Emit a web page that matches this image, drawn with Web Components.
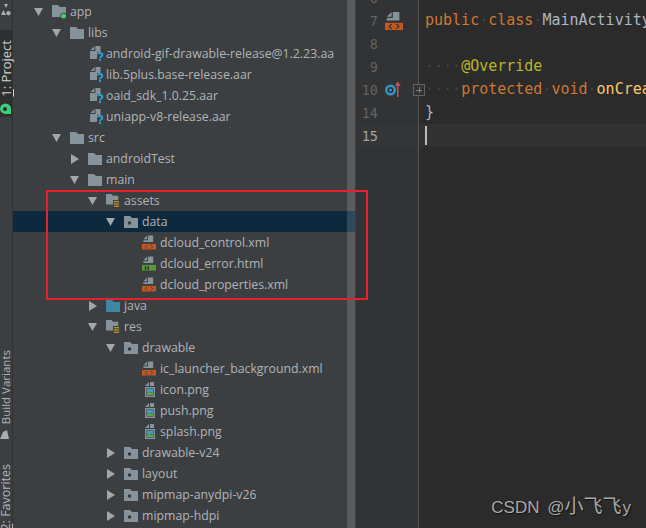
<!DOCTYPE html>
<html>
<head>
<meta charset="utf-8">
<style>
  html, body { margin: 0; height: 100%; background: #3c3f41; overflow: hidden; }
  body { font-family: "Open Sans", "Noto Sans", sans-serif; }
  ide-window { width: 646px; height: 528px; }
</style>
</head>
<body>
<script>
//shared icon markup, all drawn on a small grid
const SHEET = `<path fill="#87939a" d="M5.500 0L1.500 4h4zM6.500 0h5.500v7H1.500V5h5z"/>`;
const ICONS = {
  folder: `<svg width="14" height="12" viewBox="0 0 14 12"><path fill="#87939a" d="M0 0h6l2 2h6v10H0z"/></svg>`,
  res: `<svg width="14" height="12" viewBox="0 0 14 12"><path fill="#87939a" d="M0 0h6l2 2h6v10H0z"/><circle cx="5.500" cy="7" r="1.800" fill="#33383b"/></svg>`,
  java: `<svg width="14" height="12" viewBox="0 0 14 12"><path fill="#3f86a5" d="M0 0h6l2 2h6v10H0z"/></svg>`,
  app: `<svg width="14" height="14" viewBox="0 0 14 14"><path fill="#87939a" d="M0 0h6l2 2h6v10H0z"/><circle cx="11.500" cy="11" r="3.200" fill="#3c3f41"/><circle cx="11.500" cy="11" r="2.500" fill="#3fd06d"/></svg>`,
  lined: `<svg width="16" height="15" viewBox="0 0 16 15"><path fill="#87939a" d="M0 0h6l2 2h6v10H0z"/><path fill="#3c3f41" d="M8 7h8v8H8z"/><path fill="#e0a52e" d="M9 8h6v1H9zM9 10h6v1H9zM9 12h6v1H9zM9 14h6v1H9z"/></svg>`,
  unknown: `<svg width="14" height="15" viewBox="0 0 14 15"><path fill="#87939a" d="M4.500 0L.5 4h4zM5.500 0h5v6H7v7H0V5h5.500z"/><path fill="none" stroke="#2f9fd0" stroke-width="2" d="M7.500 8.200c.5-1.600 4.800-1.600 4.800.7 0 1.500-2.300 1.700-2.300 3.300"/><path fill="#2f9fd0" d="M9 13h2v2H9z"/></svg>`,
  xml: `<svg width="15" height="15" viewBox="0 0 15 15">${SHEET}<path fill="#c2581f" d="M0 9h15v6H0z"/><path fill="none" stroke="#3c3f41" d="M5.500 10l-2 2 2 2M9.500 10l2 2-2 2"/></svg>`,
  html: `<svg width="15" height="15" viewBox="0 0 15 15">${SHEET}<path fill="#569a3c" d="M0 9h15v6H0z"/><path fill="#2c3a2a" d="M3 10h1.200v1.800h2V10h1.200v4.500H6.200v-1.700h-2v1.700H3z"/></svg>`,
  png: `<svg width="12" height="15" viewBox="0 0 12 15"><path fill="#87939a" d="M5 0L1 4h4zM6 0h4v4H6z"/><path fill="#87939a" d="M1 5h10v10H1z"/><path fill="#2f3436" d="M2.500 6.500h7v7h-7z"/><path fill="#3b9dc4" d="M3 7h6v3.500H3z"/><path fill="#5fa344" d="M3 13v-2l2-1.500 2 1.500 2-1v3z"/></svg>`
};

var template_row = document.createElement("template");
template_row.innerHTML = `
<style>
  :host { display: flex; align-items: center; height: 21px; flex: none; white-space: nowrap;
          padding-left: calc(21px + 18px * var(--depth, 0)); color: #b0b4b8; font-size: 12.300px; }
  :host([selected]) { background: #0d293e; }
  #arrow { width: 9px; height: 10px; margin-right: 9px; flex: none; }
  #icon { width: 14px; margin-right: 4px; flex: none; display: flex; align-items: center; overflow: visible; height: 15px; }
  :host([file]) #icon { margin-left: 2px; margin-right: 2px; }
</style>
<svg id="arrow" viewBox="0 0 9 10"></svg><span id="icon"></span><span id="label"><slot></slot></span>
`;
class TreeRow extends HTMLElement {
  constructor(){
    super();
    this.attachShadow({mode:"open"});
  }
  connectedCallback(){
    this.shadowRoot.appendChild(template_row.content.cloneNode(true));
    this.style.setProperty("--depth", this.getAttribute("depth") || 0);
    const arrow = this.shadowRoot.querySelector("#arrow");
    const state = this.getAttribute("arrow");
    if(state == "open") arrow.innerHTML = `<path fill="#a0a6aa" d="M0 1h9L4.500 9z"/>`;
    if(state == "closed") arrow.innerHTML = `<path fill="#a0a6aa" d="M1 0l8 5-8 5z"/>`;
    this.shadowRoot.querySelector("#icon").innerHTML = ICONS[this.getAttribute("icon")] || "";
  }
}
customElements.define("tree-row", TreeRow);

var template_tab = document.createElement("template");
template_tab.innerHTML = `
<style>
  :host { display: flex; flex-direction: column; align-items: center; flex: none; color: #b0b4b8; font-size: 11.500px; width: 12px; }
  :host([active]) { background: #2d2f30; color: #d0d0d0; }
  span { writing-mode: vertical-rl; transform: rotate(180deg); white-space: nowrap; line-height: 12px; }
  u { text-underline-offset: 1px; }
</style>
<span><slot></slot></span><slot name="icon"></slot>
`;
class ToolTab extends HTMLElement {
  constructor(){
    super();
    this.attachShadow({mode:"open"});
    this.shadowRoot.appendChild(template_tab.content.cloneNode(true));
  }
}
customElements.define("tool-tab", ToolTab);

var template_line = document.createElement("template");
template_line.innerHTML = `
<style>
  :host { display: flex; height: 23px; flex: none; font-family: "DejaVu Sans Mono", "Liberation Mono", monospace; }
  :host([fill]) { flex: 1; }
  #gut { width: 62px; flex: none; background: #313335; border-right: 1px solid #555; position: relative; display: flex; align-items: center; }
  #num { width: 22px; text-align: right; color: #606366; font-size: 13.500px; }
  #mark { position: absolute; left: 29px; top: 3px; }
  #code { flex: 1; padding-left: 6px; font-size: 15px; line-height: 23px; white-space: pre; color: #a9b7c6; overflow: hidden; position: relative; }
  :host([current]) #gut { background: #333537; }
  :host([current]) #code { background: #323232; }
  :host([current]) #num { color: #a4a3a3; }
  #fold { display: none; position: absolute; left: 57px; top: 6px; width: 10px; height: 10px; border: 1px solid #606366; background: #313335; color: #808080; }
  #fold::before { content: ""; position: absolute; left: 2px; right: 2px; top: 4.500px; height: 1px; background: #808080; }
  #fold::after { content: ""; position: absolute; top: 2px; bottom: 2px; left: 4.500px; width: 1px; background: #808080; }
  :host([fold]) #fold { display: block; }
</style>
<div id="gut"><span id="num"></span><span id="mark"><slot name="mark"></slot></span><span id="fold"></span></div>
<div id="code"><slot></slot></div>
`;
class CodeLine extends HTMLElement {
  constructor(){
    super();
    this.attachShadow({mode:"open"});
    this.shadowRoot.appendChild(template_line.content.cloneNode(true));
  }
  connectedCallback(){
    this.shadowRoot.querySelector("#num").textContent = this.getAttribute("num") || "";
  }
}
customElements.define("code-line", CodeLine);

var template_win = document.createElement("template");
template_win.innerHTML = `
<style>
  :host { display: flex; position: relative; overflow: hidden; background: #3c3f41; }
  #strip { width: 12px; flex: none; display: flex; flex-direction: column; border-right: 1px solid #323232; }
  #panel { width: 342px; flex: none; position: relative; overflow: hidden; display: flex; flex-direction: column; padding-top: 1px; box-sizing: border-box; }
  #bar { position: absolute; left: 334px; top: 0; bottom: 0; width: 8px; background: rgba(255,255,255,.15); }
  #editor { flex: 1; min-width: 0; display: flex; flex-direction: column; background: #2b2b2b; overflow: hidden; margin-left: 1px; }
  #box { position: absolute; left: 46px; top: 190px; width: 318px; height: 106px; border: 2px solid #e6212b; }
  #mark { position: absolute; right: 15px; bottom: 9px; color: #a8a8a8; font: 17px/22px "Liberation Sans", "Noto Sans CJK SC", sans-serif; text-shadow: 1px 1px 1px #111; white-space: nowrap; word-spacing: 3px; }
</style>
<div id="strip"><slot name="strip"></slot></div>
<div id="panel"><slot name="tree"></slot><div id="bar"></div></div>
<div id="editor"><slot name="editor"></slot></div>
<div id="box"></div>
<div id="mark"><slot name="mark"></slot></div>
`;
class IdeWindow extends HTMLElement {
  constructor(){
    super();
    this.attachShadow({mode:"open"});
    this.shadowRoot.appendChild(template_win.content.cloneNode(true));
  }
}
customElements.define("ide-window", IdeWindow);

//tree data: depth, arrow, icon, label
const TREE = [
  [0,"open","app","app"],[1,"open","folder","libs"],
  [2,"","unknown","android-gif-drawable-release@1.2.23.aa"],[2,"","unknown","lib.5plus.base-release.aar"],
  [2,"","unknown","oaid_sdk_1.0.25.aar"],[2,"","unknown","uniapp-v8-release.aar"],
  [1,"open","folder","src"],[2,"closed","folder","androidTest"],[2,"open","folder","main"],
  [3,"open","lined","assets"],[4,"open","res","data",1],
  [5,"","xml","dcloud_control.xml"],[5,"","html","dcloud_error.html"],[5,"","xml","dcloud_properties.xml"],
  [3,"closed","java","java"],[3,"open","lined","res"],[4,"open","res","drawable"],
  [5,"","xml","ic_launcher_background.xml"],[5,"","png","icon.png"],[5,"","png","push.png"],[5,"","png","splash.png"],
  [4,"closed","res","drawable-v24"],[4,"closed","res","layout"],[4,"closed","res","mipmap-anydpi-v26"],[4,"closed","res","mipmap-hdpi"]
];
const kw = s => `<span style="color:#cc7832">${s}</span>`;
const ws = s => `<span style="color:#454545">${s}</span>`;

const win = document.createElement("ide-window");
win.innerHTML = `
  <tool-tab slot="strip" style="height:30px">
    <svg slot="icon" width="10" height="16" viewBox="0 0 10 16"><path fill="#a9adb0" d="M3 4h4l-2 4zM0 15l2.500-5 2.500 5zM7.500 11a2.200 2.200 0 1 1-.1 0z"/></svg>
  </tool-tab>
  <tool-tab slot="strip" active style="height:87px;padding-top:10px;box-sizing:border-box;font-size:13px"><u>1</u>: Project
    <svg slot="icon" width="12" height="14" viewBox="0 0 12 14" style="margin-top:5px"><path fill="#3ccf79" d="M0 7a5.500 5.500 0 0 1 11 0v5H5.500A5.500 5.500 0 0 1 0 7z"/><circle cx="5" cy="7" r="2" fill="#2d2f30"/></svg>
  </tool-tab>
  <tool-tab slot="strip" style="margin-top:233px">Build Variants
    <svg slot="icon" width="11" height="10" viewBox="0 0 11 10" style="margin-top:6px;margin-left:-2px"><path fill="#a9adb0" d="M0 9L3 2l4-2 2 9z"/></svg>
  </tool-tab>
  <tool-tab slot="strip" style="margin-top:24px;font-size:12.500px"><u>2</u>: Favorites
    <svg slot="icon" width="10" height="6" viewBox="0 0 10 6" style="margin-top:4px"><path fill="#a9adb0" d="M5 0l2 4H3z"/></svg>
  </tool-tab>
  ${TREE.map(r => `<tree-row slot="tree" depth="${r[0]}" arrow="${r[1]}" icon="${r[2]}" ${r[2]=="unknown"||r[2]=="png"?"file":""} ${r[4]?"selected":""}>${r[3]}</tree-row>`).join("")}
  <code-line slot="editor" num="6" style="margin-top:-14px"></code-line>
  <code-line slot="editor" num="7"><svg slot="mark" width="18" height="18" viewBox="0 0 15 15"><path fill="#87939a" d="M5.500 0L1.500 4h4zM6.500 0h5.500v7H1.500V5h5z"/><path fill="#c2581f" d="M0 9h15v6H0z"/><path fill="none" stroke="#33302c" d="M5.500 10l-2 2 2 2M9.500 10l2 2-2 2"/></svg>${kw("public")}${ws("·")}${kw("class")}${ws("·")}MainActivity</code-line>
  <code-line slot="editor" num="8"></code-line>
  <code-line slot="editor" num="9">${ws("····")}<span style="color:#bbb529">@Override</span></code-line>
  <code-line slot="editor" num="10" fold><svg slot="mark" width="16" height="16" viewBox="0 0 16 16"><circle cx="5.500" cy="9" r="5.500" fill="#3592c4"/><circle cx="5.500" cy="9" r="3" fill="#2b2f33"/><circle cx="5.500" cy="9" r="1.500" fill="#3592c4"/><path fill="#c75450" d="M12 16V4h1.500v12zM9.800 5l3-4.500 3 4.500z"/></svg>${ws("····")}${kw("protected")}${ws("·")}${kw("void")}${ws("·")}<span style="color:#ffc66d">onCreate</span></code-line>
  <code-line slot="editor" num="14">}</code-line>
  <code-line slot="editor" num="15" current><span style="display:inline-block;width:2px;height:19px;background:#bbb;vertical-align:-4px;margin-top:2px"></span></code-line>
  <code-line slot="editor" fill></code-line>
  <span slot="mark">CSDN @<span style="font-size:19px;margin-right:1px">小飞飞</span>y</span>
`;
document.body.appendChild(win);
</script>
</body>
</html>
